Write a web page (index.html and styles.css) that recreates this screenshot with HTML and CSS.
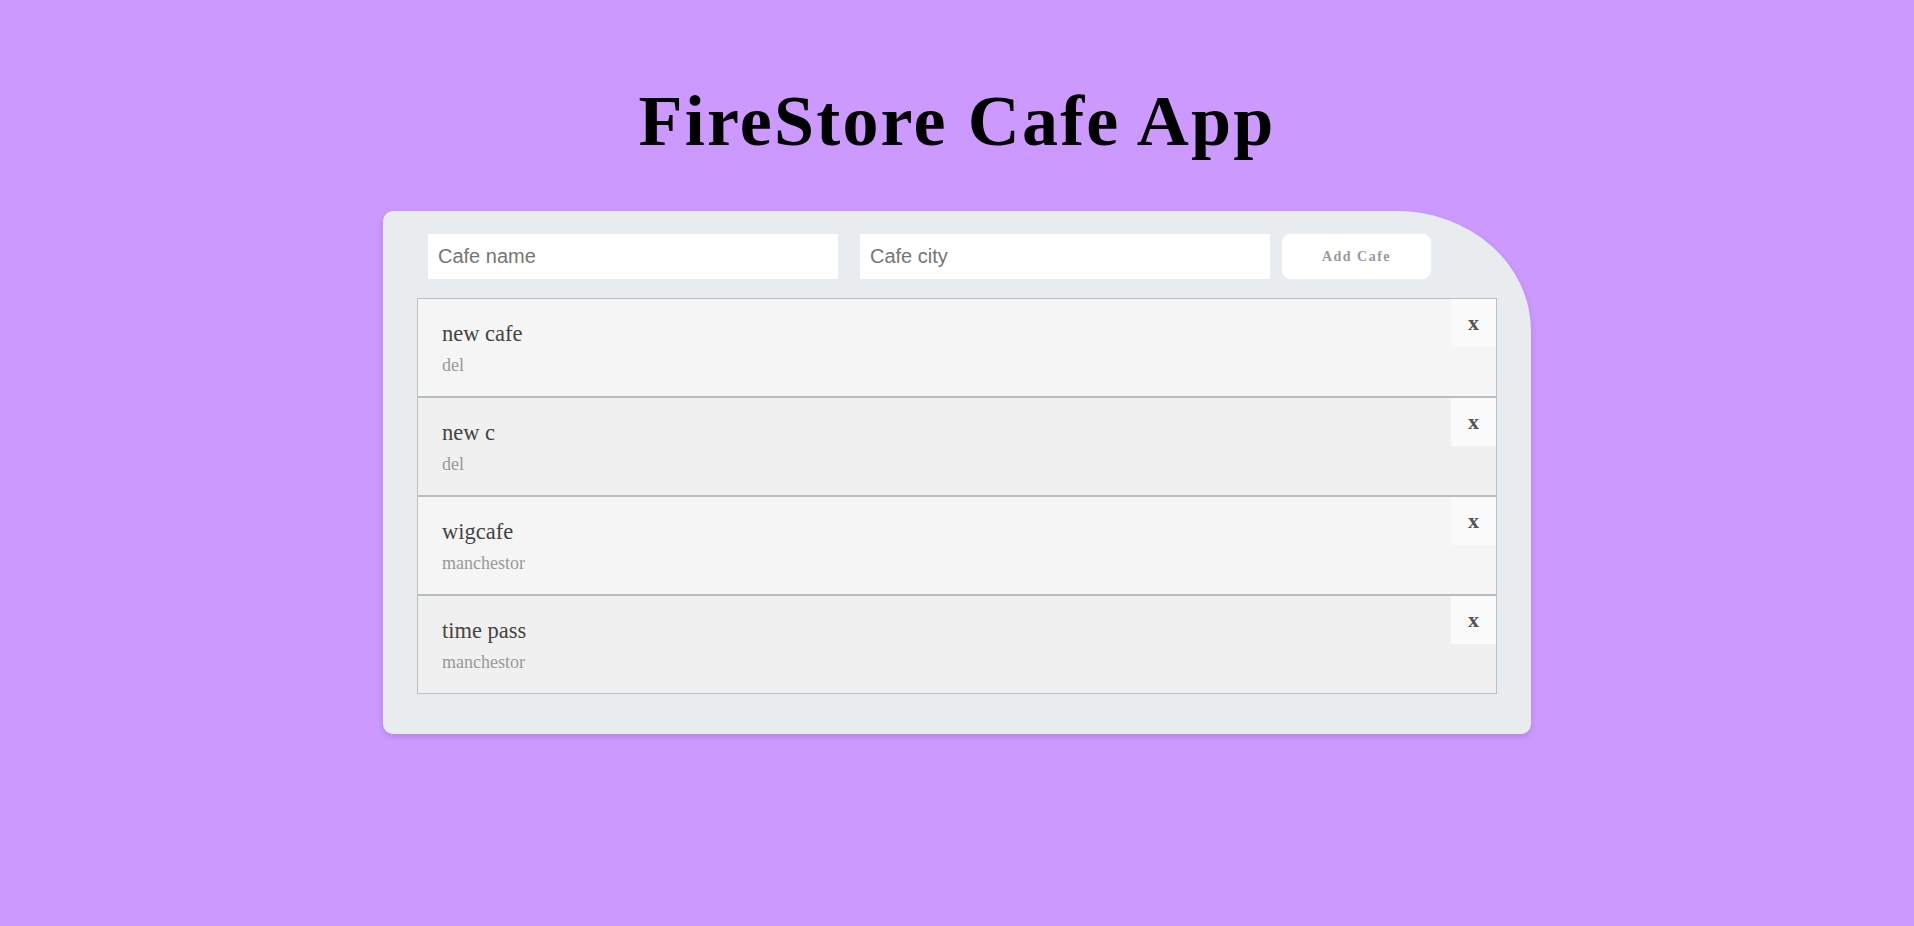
FILE: index.html
```html
<!DOCTYPE html>
<html lang="en">
<head>
<meta charset="utf-8">
<title>FireStore Cafe App</title>
<link rel="stylesheet" href="styles.css">
</head>
<body>
  <h1 class="title">FireStore Cafe App</h1>
  <div class="content">
    <form class="add-form">
      <input class="field field-name" type="text" name="name" placeholder="Cafe name">
      <input class="field field-city" type="text" name="city" placeholder="Cafe city">
      <button class="add-btn" type="button">Add Cafe</button>
    </form>
    <ul class="cafe-list">
      <li class="cafe">
        <span class="cafe-name">new cafe</span>
        <span class="cafe-city">del</span>
        <div class="delete">x</div>
      </li>
      <li class="cafe">
        <span class="cafe-name">new c</span>
        <span class="cafe-city">del</span>
        <div class="delete">x</div>
      </li>
      <li class="cafe">
        <span class="cafe-name">wigcafe</span>
        <span class="cafe-city">manchestor</span>
        <div class="delete">x</div>
      </li>
      <li class="cafe">
        <span class="cafe-name">time pass</span>
        <span class="cafe-city">manchestor</span>
        <div class="delete">x</div>
      </li>
    </ul>
  </div>
</body>
</html>
```

FILE: styles.css
```css
html, body {
  margin: 0;
  padding: 0;
}

body {
  background: #cc99ff;
  font-family: "Liberation Serif", "Times New Roman", serif;
  min-height: 926px;
}

.title {
  margin: 81px 0 50px;
  text-align: center;
  font-family: "Liberation Serif", "Times New Roman", serif;
  font-weight: bold;
  font-size: 72px;
  line-height: 80px;
  letter-spacing: 2.2px;
  color: #000;
}

.content {
  width: 1148px;
  box-sizing: border-box;
  margin: 0 auto;
  background: #e9ecef;
  padding: 22px 34px 40px;
  border-radius: 10px 134px 10px 10px / 10px 120px 10px 10px;
  box-shadow: 0 3px 6px rgba(0, 0, 0, 0.12);
}

.add-form {
  display: flex;
  align-items: center;
  padding-left: 11px;
  margin: 0 0 18px;
  height: 47px;
}

.field {
  width: 410px;
  height: 45px;
  box-sizing: border-box;
  border: none;
  outline: none;
  background: #fff;
  padding: 0 10px;
  font-family: "Liberation Sans", Arial, sans-serif;
  font-size: 20px;
  color: #555;
}

.field::placeholder {
  color: #757575;
}

.field-name {
  margin-right: 22px;
}

.field-city {
  margin-right: 11px;
}

.add-btn {
  width: 151px;
  height: 47px;
  box-sizing: border-box;
  background: #fff;
  border: 1px solid #eef0f2;
  border-radius: 10px;
  font-family: "Liberation Serif", "Times New Roman", serif;
  font-weight: bold;
  font-size: 14px;
  letter-spacing: 1.5px;
  color: #999;
  padding: 0;
}

.cafe-list {
  list-style: none;
  margin: 0;
  padding: 0;
  border: 1px solid #b9c1c5;
}

.cafe {
  position: relative;
  display: flex;
  flex-direction: column;
  padding: 22px 24px 20px 24px;
  background: #f5f5f6;
}

.cafe:nth-child(even) {
  background: #f0f0f0;
}

.cafe:not(:last-child) {
  border-bottom: 2px solid #b5bec2;
}

.cafe-name {
  font-size: 22.5px;
  line-height: 26px;
  color: #444;
  margin-bottom: 8px;
}

.cafe-city {
  font-size: 18px;
  line-height: 21px;
  color: #999;
}

.delete {
  position: absolute;
  top: 0;
  right: 0;
  width: 45px;
  height: 48px;
  display: flex;
  align-items: center;
  justify-content: center;
  background: #fafafa;
  font-weight: bold;
  font-size: 22px;
  color: #555;
  cursor: pointer;
}
```
